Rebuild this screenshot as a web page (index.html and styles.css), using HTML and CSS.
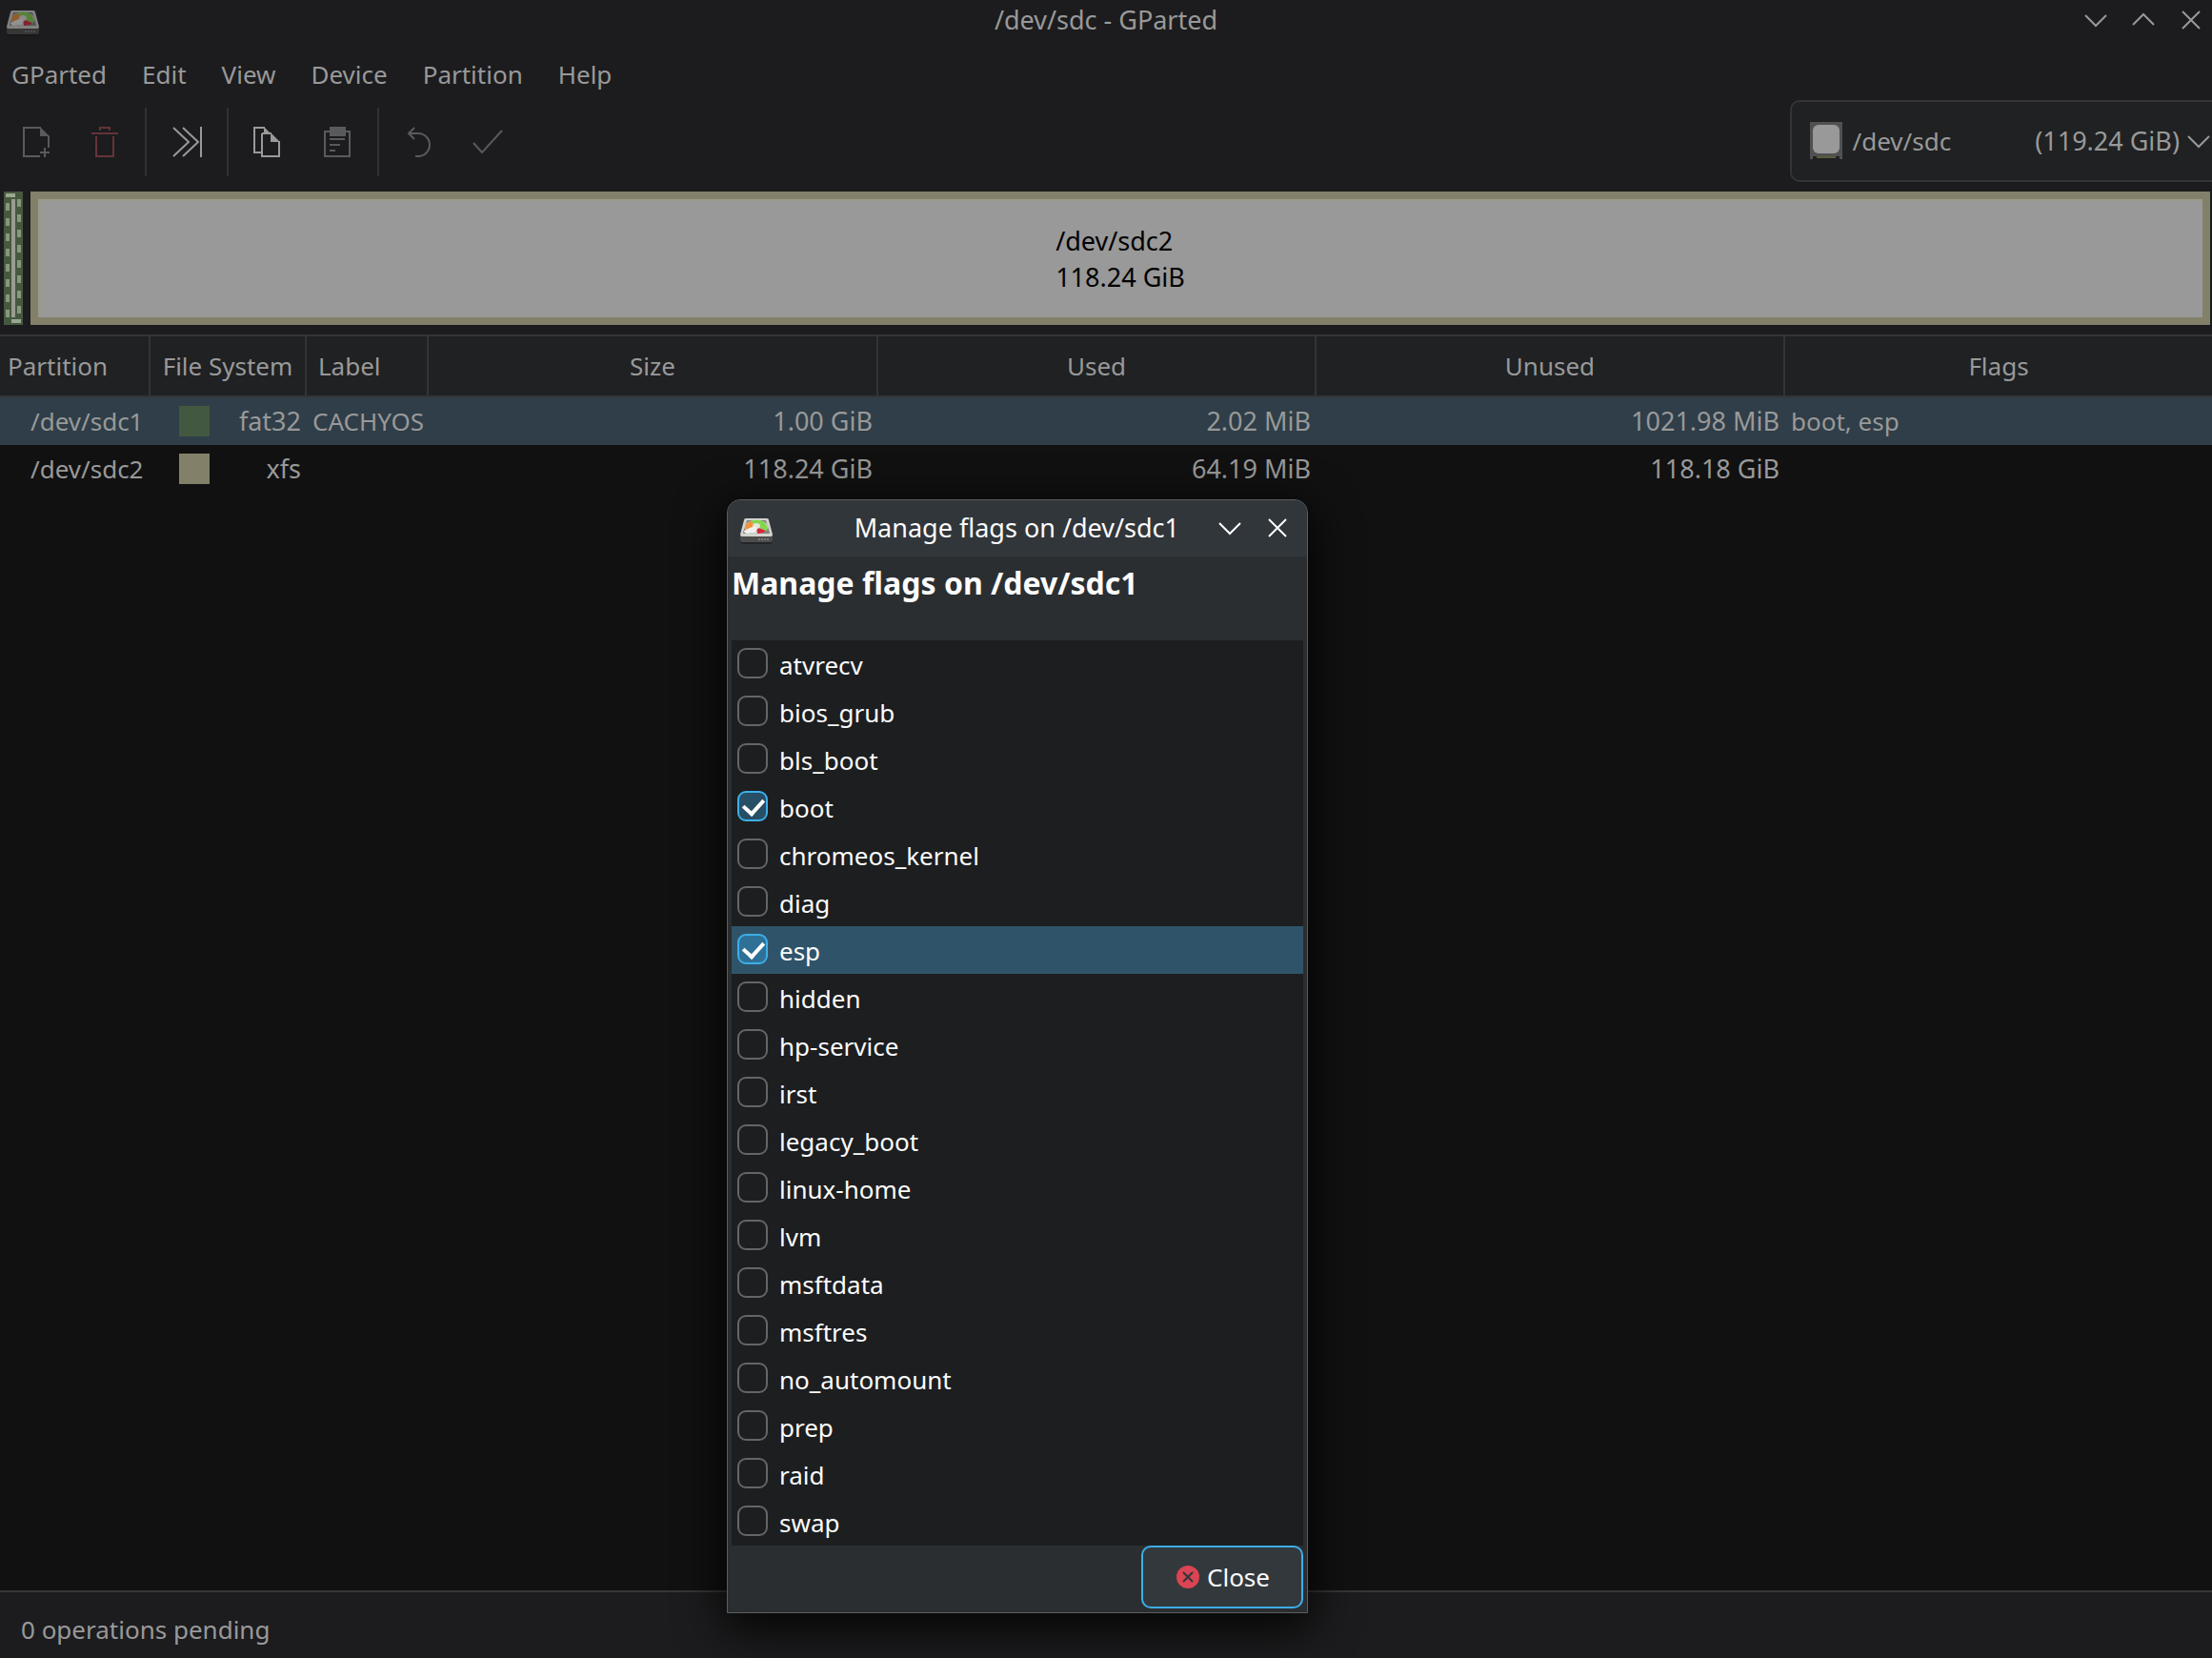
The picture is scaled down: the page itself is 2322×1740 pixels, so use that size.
FILE: index.html
```html
<!DOCTYPE html>
<html lang="en">
<head>
<meta charset="utf-8">
<title>/dev/sdc - GParted</title>
<link rel="stylesheet" href="styles.css">
</head>
<body>
<svg class="defs" aria-hidden="true">
  <symbol id="app" viewBox="0 0 36 36">
    <path d="M1 30h34v2q0 3-3 3H5q-4 0-4-3z" fill="#000" opacity=".3"/>
    <path d="M5 9h26l4 17v5q0 2-2 2H3q-2 0-2-2v-5z" fill="#4c4d4c"/>
    <path d="M7 8h22q2 0 2 2l4 15q0 2-2 2H3q-2 0-2-2l4-15q0-2 2-2z" fill="#d4d4cf"/>
    <path d="M8 10h20l4 13q0 1-1 1H5q-1 0-1-1z" fill="#85867f"/>
    <ellipse cx="18" cy="17" rx="12" ry="7" fill="#d9d9d4"/>
    <path d="M18 17L12 11q8-3 14 1 6 5 2 9z" fill="#83d648"/>
    <path d="M18 17L7 20q-3-6 5-9z" fill="#f0923a"/>
    <path d="M18 17l10 4q-3 3-9 3z" fill="#d8273c"/>
    <ellipse cx="18" cy="16" rx="4" ry="3" fill="#e4e4e0"/>
    <path d="M5 21l6-3 6-2 2 3-3 4-7 1q-4 0-4-3z" fill="#f1f1ef"/>
    <path d="M20 30h12" stroke="#777876" stroke-width="2" stroke-dasharray="2 1"/>
  </symbol>
  <symbol id="down" viewBox="0 0 24 24"><path d="M1 7l11 11L23 7"/></symbol>
  <symbol id="up" viewBox="0 0 24 24"><path d="M1 17L12 6l11 11"/></symbol>
  <symbol id="cross" viewBox="0 0 24 24"><path d="M3 3l18 18M21 3L3 21"/></symbol>
</svg>

<main class="window">
  <header class="titlebar">
    <svg class="app-icon dim"><use href="#app"/></svg>
    <h1 class="title">/dev/sdc - GParted</h1>
    <div class="controls">
      <button class="control" aria-label="Minimize"><svg class="glyph"><use href="#down"/></svg></button>
      <button class="control" aria-label="Maximize"><svg class="glyph"><use href="#up"/></svg></button>
      <button class="control" aria-label="Close window"><svg class="glyph"><use href="#cross"/></svg></button>
    </div>
  </header>

  <nav class="menubar">
    <button class="menu">GParted</button>
    <button class="menu">Edit</button>
    <button class="menu">View</button>
    <button class="menu">Device</button>
    <button class="menu">Partition</button>
    <button class="menu">Help</button>
  </nav>

  <div class="toolbar">
    <div class="group">
      <button class="tool off" aria-label="New"><svg class="tool-icon" viewBox="0 0 32 32"><path d="M20 31H3V1h18M29 10v12M25 22v10M20 27h10"/><path class="solid" d="M20 0l10 10H20z"/></svg></button>
      <button class="tool danger" aria-label="Delete"><svg class="tool-icon" viewBox="0 0 32 32"><path d="M2 7h28M11 4V1h10v3M7 10v21h18V10"/></svg></button>
    </div>
    <div class="group">
      <button class="tool" aria-label="Resize/Move"><svg class="tool-icon" viewBox="0 0 32 32"><path d="M2 1l16 15L2 31M12 1l16 15L12 31M31 0v32"/></svg></button>
    </div>
    <div class="group">
      <button class="tool" aria-label="Copy"><svg class="tool-icon" viewBox="0 0 32 32"><path d="M9 27H1V1h11M9 7v24h18V15M9 7h10"/><path class="solid" d="M11 0l8 8h-8zM18 6l10 10H18z"/></svg></button>
      <button class="tool off" aria-label="Paste"><svg class="tool-icon" viewBox="0 0 32 32"><path d="M3 5h26v26H3zM8 13h16M8 19h11M8 25h6"/><path class="solid" d="M8 0h17v10H8z"/></svg></button>
    </div>
    <div class="group">
      <button class="tool off" aria-label="Undo"><svg class="tool-icon" viewBox="0 0 32 32"><path d="M11 1L5 7l6 6M5 7h10a12 12 0 0 1 0 24h-3"/></svg></button>
      <button class="tool off" aria-label="Apply"><svg class="tool-icon" viewBox="0 0 32 32"><path d="M1 17l9 10L31 4"/></svg></button>
    </div>
    <button class="device" aria-haspopup="listbox" aria-label="Device">
      <svg class="disk" viewBox="0 0 36 42"><path d="M1 1h34v39h-3v-3H4v3H1z" fill="#515151"/><rect x="4" y="4" width="28" height="30" rx="6" fill="#999"/><path d="M8 38h20" stroke="#5c5a3c" stroke-width="2"/></svg>
      <span class="device-name">/dev/sdc</span>
      <span class="device-size">(119.24 GiB)</span>
      <svg class="glyph"><use href="#down"/></svg>
    </button>
  </div>

  <section class="visual" aria-label="Disk layout">
    <div class="part-small"><svg class="ants" viewBox="0 0 20 140"><path d="M10 8v124" stroke="#999c92" stroke-width="4"/><path d="M4 12v120M16 8v124" stroke="#88977d" stroke-width="4" stroke-dasharray="8 8"/><path d="M2 4h10M8 136h10" stroke="#99a692" stroke-width="4"/></svg></div>
    <div class="part-large">
      <div class="part-label">/dev/sdc2<br>118.24 GiB</div>
    </div>
  </section>

  <section class="list">
    <table class="partitions">
      <colgroup><col class="c-part"><col class="c-fs"><col class="c-label"><col class="c-size"><col class="c-used"><col class="c-unused"><col></colgroup>
      <thead>
        <tr><th class="first">Partition</th><th>File System</th><th class="left">Label</th><th>Size</th><th>Used</th><th>Unused</th><th>Flags</th></tr>
      </thead>
      <tbody>
        <tr class="selected"><td class="name">/dev/sdc1</td><td><div class="fs"><span class="swatch green"></span>fat32</div></td><td>CACHYOS</td><td class="num">1.00 GiB</td><td class="num">2.02 MiB</td><td class="num">1021.98 MiB</td><td>boot, esp</td></tr>
        <tr><td class="name">/dev/sdc2</td><td><div class="fs"><span class="swatch sand"></span>xfs</div></td><td></td><td class="num">118.24 GiB</td><td class="num">64.19 MiB</td><td class="num">118.18 GiB</td><td></td></tr>
      </tbody>
    </table>
  </section>

  <footer class="status">0 operations pending</footer>
</main>

<div class="dialog" role="dialog" aria-labelledby="dialog-title">
  <header class="dialog-bar">
    <svg class="app-icon"><use href="#app"/></svg>
    <span class="dialog-caption">Manage flags on /dev/sdc1</span>
    <div class="controls">
      <button class="control" aria-label="Minimize dialog"><svg class="glyph"><use href="#down"/></svg></button>
      <button class="control" aria-label="Close dialog"><svg class="glyph"><use href="#cross"/></svg></button>
    </div>
  </header>
  <div class="dialog-body">
    <h2 class="heading" id="dialog-title">Manage flags on /dev/sdc1</h2>
    <div class="flags">
      <label class="flag"><input type="checkbox" class="box">atvrecv</label>
      <label class="flag"><input type="checkbox" class="box">bios_grub</label>
      <label class="flag"><input type="checkbox" class="box">bls_boot</label>
      <label class="flag"><input type="checkbox" class="box" checked>boot</label>
      <label class="flag"><input type="checkbox" class="box">chromeos_kernel</label>
      <label class="flag"><input type="checkbox" class="box">diag</label>
      <label class="flag current"><input type="checkbox" class="box" checked>esp</label>
      <label class="flag"><input type="checkbox" class="box">hidden</label>
      <label class="flag"><input type="checkbox" class="box">hp-service</label>
      <label class="flag"><input type="checkbox" class="box">irst</label>
      <label class="flag"><input type="checkbox" class="box">legacy_boot</label>
      <label class="flag"><input type="checkbox" class="box">linux-home</label>
      <label class="flag"><input type="checkbox" class="box">lvm</label>
      <label class="flag"><input type="checkbox" class="box">msftdata</label>
      <label class="flag"><input type="checkbox" class="box">msftres</label>
      <label class="flag"><input type="checkbox" class="box">no_automount</label>
      <label class="flag"><input type="checkbox" class="box">prep</label>
      <label class="flag"><input type="checkbox" class="box">raid</label>
      <label class="flag"><input type="checkbox" class="box">swap</label>
    </div>
    <div class="actions">
      <button class="close"><svg class="close-icon" viewBox="0 0 24 24"><circle cx="12" cy="12" r="12" fill="#da4453"/><path d="M7 7l10 10M17 7L7 17" stroke="#31363b" stroke-width="2"/></svg>Close</button>
    </div>
  </div>
</div>
</body>
</html>
```
FILE: styles.css
```css
* {
  box-sizing: border-box;
}

body {
  margin: 0;
  background: #1c1c1e;
  color: #999;
  font: 26px/38px "Noto Sans", sans-serif;
}

button {
  margin: 0;
  padding: 0;
  border: 0;
  background: none;
  color: inherit;
  font: inherit;
}

svg {
  display: block;
  flex: none;
}

.defs {
  position: absolute;
  width: 0;
  height: 0;
}

.window {
  display: flex;
  flex-direction: column;
  min-height: 100vh;
}

/* Title bar */
.titlebar {
  display: grid;
  grid-template-columns: 1fr auto 1fr;
  align-items: center;
  height: 44px;
  padding: 0 10px 2px 6px;
}

.title {
  margin: 0;
  padding-left: 4px;
  font-size: 27px;
  font-weight: 400;
}

.app-icon {
  width: 36px;
  height: 36px;
}

.dim {
  opacity: 0.55;
}

.controls {
  display: flex;
  gap: 26px;
  justify-self: end;
}

.glyph {
  width: 24px;
  height: 24px;
  fill: none;
  stroke: currentColor;
  stroke-width: 2;
}

/* Menu bar */
.menubar {
  display: flex;
  gap: 37px;
  height: 61px;
  padding: 15px 12px 8px;
}

/* Tool bar */
.toolbar {
  display: flex;
  align-items: center;
  height: 88px;
}

.group {
  display: flex;
  gap: 10px;
  height: 72px;
  padding: 0 11px;
  border-right: 2px solid #303133;
}

.group:first-child {
  padding-left: 7px;
}

.group:nth-child(4) {
  border-right: 0;
}

.tool {
  display: flex;
  align-items: center;
  justify-content: center;
  width: 62px;
}

.tool-icon {
  width: 32px;
  height: 32px;
  fill: none;
  stroke: currentColor;
  stroke-width: 2;
}

.solid {
  fill: currentColor;
  stroke: none;
}

.off {
  color: #595a5b;
}

.danger {
  color: #633439;
}

.device {
  display: flex;
  align-items: center;
  align-self: flex-start;
  height: 86px;
  margin-left: auto;
  padding: 0 2px 0 18px;
  border: 2px solid #323436;
  border-right: 0;
  border-radius: 10px 0 0 10px;
  background: #1f2122;
}

.disk {
  width: 36px;
  height: 42px;
  margin-right: 10px;
}

.device-name {
  margin-right: 88px;
}

.device-size {
  font-size: 27px;
}

.device .glyph {
  margin-left: 8px;
}

/* Disk layout strip */
.visual {
  display: flex;
  gap: 8px;
  height: 158px;
  padding: 8px 2px 10px 4px;
}

.part-small {
  width: 20px;
  background: #45593f;
}

.ants {
  width: 20px;
  height: 140px;
}

.part-large {
  display: flex;
  flex: 1;
  align-items: center;
  justify-content: center;
  padding-top: 2px;
  border: 8px solid #83806a;
  background: #999;
  box-shadow: inset 3px 2px #9a9a8a;
  color: #000;
  font-size: 27px;
}

/* Partition table */
.list {
  flex: 1;
  border-top: 2px solid #333436;
  border-bottom: 2px solid #353637;
  background: #111;
}

.partitions {
  width: 100%;
  border-collapse: separate;
  border-spacing: 0;
  table-layout: fixed;
}

.c-part {
  width: 158px;
}

.c-fs {
  width: 164px;
}

.c-label {
  width: 128px;
}

.c-size {
  width: 472px;
}

.c-used {
  width: 460px;
}

.c-unused {
  width: 492px;
}

th {
  height: 64px;
  padding: 0 4px;
  border-right: 2px solid #333436;
  border-bottom: 2px solid #323436;
  background: #1f2123;
  font-weight: 400;
}

th:last-child {
  border-right: 0;
}

.first {
  padding-left: 8px;
  text-align: left;
}

.left {
  padding-left: 12px;
  text-align: left;
}

td {
  height: 50px;
  padding: 0 6px;
  white-space: nowrap;
}

.selected td {
  background: #2f3e48;
}

.name {
  padding-left: 32px;
}

.num {
  font-size: 27px;
  text-align: right;
}

.fs {
  display: flex;
  align-items: center;
  justify-content: space-between;
  padding-left: 24px;
  font-size: 27px;
}

.swatch {
  width: 32px;
  height: 32px;
}

.green {
  background: #425840;
}

.sand {
  background: #83806a;
}

.status {
  height: 69px;
  padding: 20px 22px 0;
}

/* Flags dialog */
.dialog {
  position: absolute;
  top: 524px;
  left: 763px;
  width: 610px;
  border: 1px solid #5b5d60;
  border-radius: 14px 14px 0 0;
  background: #2a2e31;
  box-shadow: 0 12px 48px 4px rgba(0, 0, 0, 0.85);
  color: #fcfcfc;
}

.dialog-bar {
  display: flex;
  align-items: center;
  height: 59px;
  padding: 0 19px 2px 12px;
  border-radius: 13px 13px 0 0;
  background: #31363b;
}

.dialog-caption {
  margin-left: auto;
  font-size: 27px;
}

.dialog-bar .controls {
  margin-left: 41px;
}

.dialog-body {
  padding: 0 4px 4px;
}

.heading {
  height: 88px;
  margin: 0;
  padding-top: 7px;
  font-size: 32px;
  line-height: 42px;
}

.flags {
  background: #1c1e20;
}

.flag {
  display: flex;
  gap: 12px;
  height: 50px;
  padding: 8px 6px;
  line-height: 36px;
}

.flag.current {
  background: #2f5469;
}

.box {
  width: 32px;
  height: 32px;
  margin: 0;
  border: 2px solid #636567;
  border-radius: 9px;
  appearance: none;
}

.box:checked {
  border-color: #3daee9;
  background: #274f65;
}

.current .box:checked {
  background: #2f7096;
}

.box:checked::after {
  display: block;
  width: 10px;
  height: 17px;
  margin: 2px 0 0 8px;
  border: solid #fff;
  border-width: 0 4px 4px 0;
  content: "";
  transform: rotate(42deg);
}

.actions {
  display: flex;
  justify-content: flex-end;
}

.close {
  display: flex;
  align-items: center;
  justify-content: center;
  gap: 8px;
  width: 170px;
  height: 66px;
  padding-left: 2px;
  border: 2px solid #3daee9;
  border-radius: 10px;
  background: #33383d;
}

.close-icon {
  width: 24px;
  height: 24px;
}
```
